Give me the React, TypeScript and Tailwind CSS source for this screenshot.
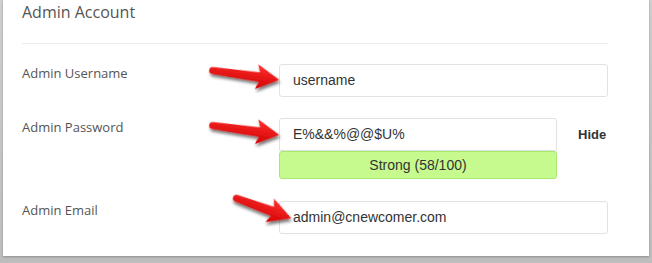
import React from "react";

type ArrowProps = {
  left: number;
  top: number;
  length: number;
  angle: number;
};

// red pointer arrow, drawn pointing right and turned by `angle`
function Arrow({ left, top, length, angle }: ArrowProps) {
  const shaft = length - 20;
  return (
    <svg
      className="absolute overflow-visible pointer-events-none"
      width={length}
      height={30}
      viewBox={`0 -15 ${length} 30`}
      style={{ left, top: top - 15, transform: `rotate(${angle}deg)`, transformOrigin: "0 15px" }}
    >
      <defs>
        <linearGradient id={`ag${top}`} x1="0" y1="0" x2="0" y2="1">
          <stop offset="0" stopColor="#ff3030" />
          <stop offset="1" stopColor="#d00000" />
        </linearGradient>
        <filter id={`as${top}`} x="-20%" y="-50%" width="140%" height="200%">
          <feDropShadow dx="1.5" dy="2.5" stdDeviation="1.4" floodColor="#000" floodOpacity="0.55" />
        </filter>
      </defs>
      <path
        d={`M3.8,-3.6 L${shaft},-4.8 L${shaft - 3},-12.5 L${length},0 L${shaft - 3},12.5 L${shaft},4.8 L3.8,3.6 A3.6,3.6 0 0 1 3.8,-3.6 Z`}
        fill={`url(#ag${top})`}
        filter={`url(#as${top})`}
        strokeLinejoin="round"
      />
    </svg>
  );
}

const labelCls =
  "w-[257px] shrink-0 text-[13px] leading-[18px] text-[#555]";
const inputCls =
  "h-[33px] rounded-[3px] border border-[#e2e2e2] bg-white pl-[13px] flex items-center text-[14px] text-[#333] font-['Liberation_Sans',Arial,sans-serif]";

export default function App() {
  return (
    <div className="w-[652px] h-[263px] bg-gradient-to-b from-[#cfcfcf] to-[#bdbdbd] px-[3px] pb-[7px] font-['Open_Sans',sans-serif]">
      <div className="relative h-[256px] bg-white pl-[19px] shadow-[0_1px_2px_rgba(0,0,0,0.25)]">
        <div className="w-[586px] h-[44px] border-b border-[#ebebeb] text-[16px] leading-[24px] text-[#555]">
          Admin Account
        </div>

        <div className="mt-[20px] flex items-start">
          <div className={labelCls}>Admin Username</div>
          <div className={`${inputCls} w-[329px]`}>username</div>
        </div>

        <div className="mt-[21px] flex items-start">
          <div className={labelCls}>Admin Password</div>
          <div className="flex flex-col">
            <div className="flex items-center">
              <div className={`${inputCls} w-[278px] rounded-b-none`}>E%&amp;&amp;%@@$U%</div>
              <span className="ml-[21px] text-[13px] font-bold text-[#333] font-['Liberation_Sans',Arial,sans-serif]">
                Hide
              </span>
            </div>
            <div className="w-[278px] h-[28px] rounded-[3px] border border-[#a6ea6c] bg-[#c6fa8e] flex items-center justify-center text-[14px] text-[#333] font-['Liberation_Sans',Arial,sans-serif]">
              Strong (58/100)
            </div>
          </div>
        </div>

        <div className="mt-[22px] flex items-start">
          <div className={labelCls}>Admin Email</div>
          <div className={`${inputCls} w-[329px]`}>admin@cnewcomer.com</div>
        </div>

        <Arrow left={206} top={70} length={71} angle={8} />
        <Arrow left={206} top={125} length={71} angle={8} />
        <Arrow left={230} top={197} length={62} angle={20} />
      </div>
    </div>
  );
}
